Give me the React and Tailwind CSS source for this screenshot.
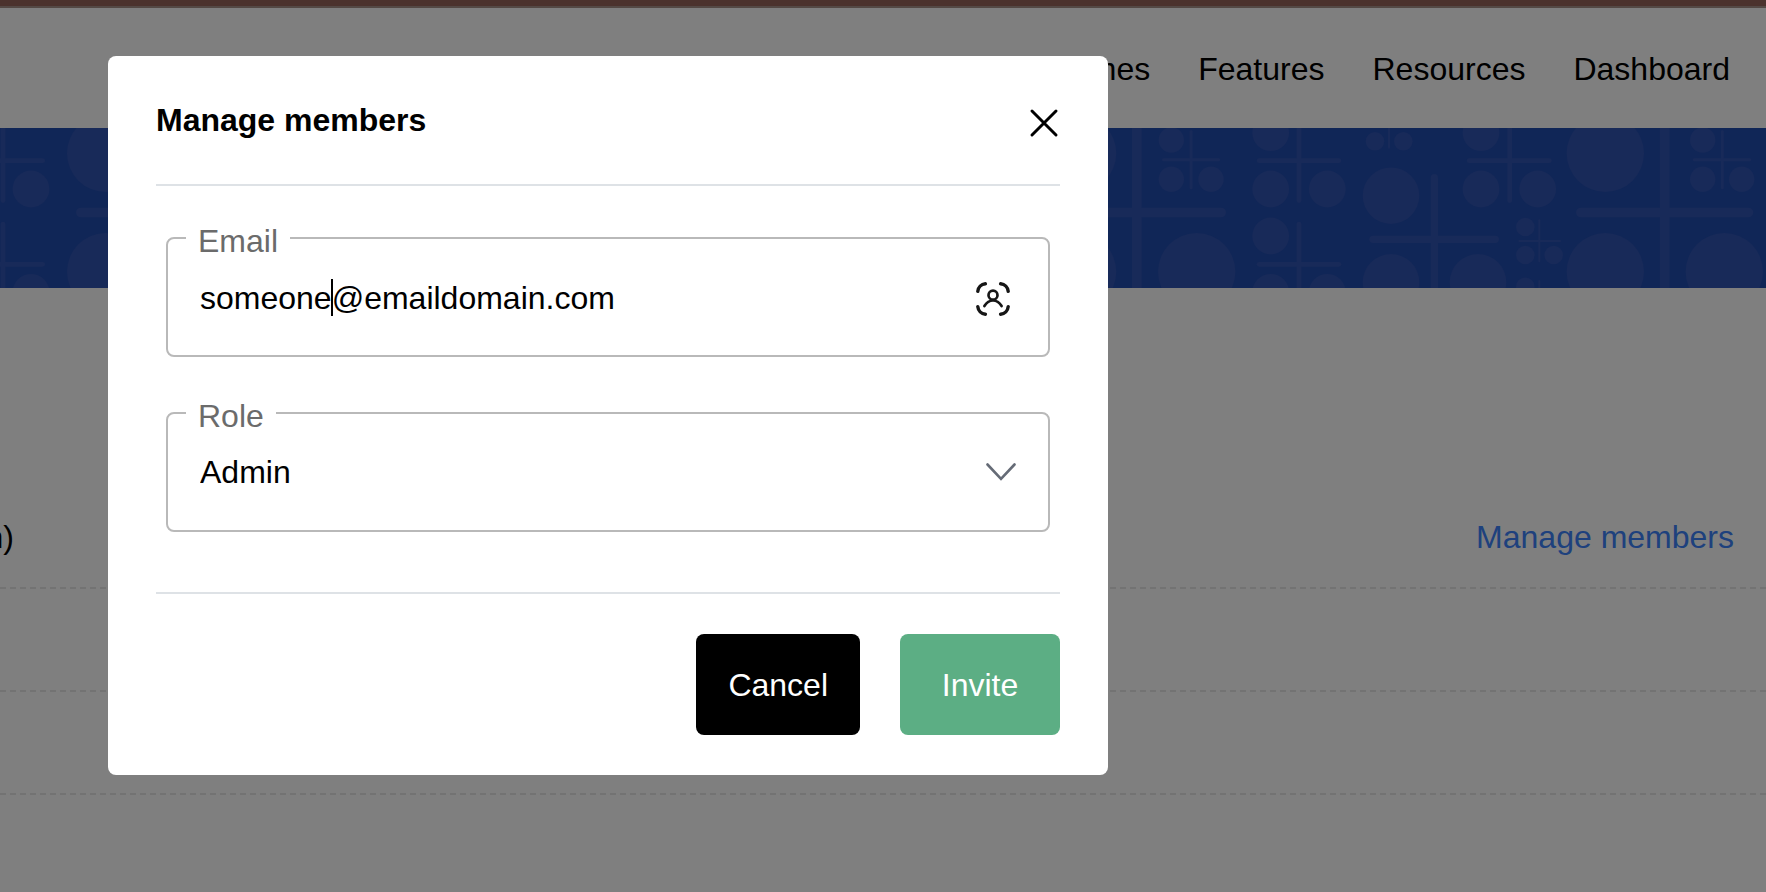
import { useState } from "react";

const navLinks = ["Games", "Features", "Resources", "Dashboard"];

// cx, cy, r
const noughts = [
  [31, 61, 18.4],
  [31, 164.3, 18.4],
  [105.7, 25.3, 38.7],
  [105.7, 143.7, 38.7],
  [1077.6, 25.3, 38.7],
  [1077.6, 143.7, 38.7],
  [1196.7, 143.7, 38.7],
  [1171.3, 12, 12.7],
  [1171.3, 51.3, 12.7],
  [1211, 51.3, 12.7],
  [1270.7, 4.7, 18.4],
  [1270.7, 61, 18.4],
  [1327.3, 61, 18.4],
  [1270.7, 108, 18.4],
  [1270.7, 164.3, 18.4],
  [1327.3, 164.3, 18.4],
  [1375, 13.3, 9.3],
  [1403.3, 13.3, 9.3],
  [1391, 67.7, 28.3],
  [1391, 154.3, 28.3],
  [1478, 154.3, 28.3],
  [1481, 4.7, 18.4],
  [1481, 61, 18.4],
  [1537.7, 61, 18.4],
  [1525.3, 99, 9.3],
  [1525.3, 127, 9.3],
  [1553.7, 127, 9.3],
  [1525.3, 158.7, 9.3],
  [1605.3, 25.3, 38.7],
  [1605.3, 143.7, 38.7],
  [1724.3, 143.7, 38.7],
  [1702.7, 12, 12.7],
  [1702.7, 51.3, 12.7],
  [1741.7, 51.3, 12.7],
];

// x, y, width, height
const bars = [
  [0.6, -10, 4.8, 85],
  [-40, 30.3, 85, 4.8],
  [0.6, 93.7, 4.8, 80],
  [-40, 133.9, 85, 4.8],
  [76, 79.7, 178, 9.6],
  [1132, -10, 9.7, 180],
  [1048, 79.7, 178, 9.6],
  [1189.6, 2, 3, 59.3],
  [1162, 30.2, 58.3, 3],
  [1296.6, -10, 4.8, 85],
  [1256.7, 30.3, 84.6, 4.8],
  [1296.6, 93.7, 4.8, 80],
  [1256.7, 133.9, 84.6, 4.8],
  [1388, -10, 2, 30.7],
  [1430.7, 46, 7.3, 130],
  [1369.3, 107.7, 129.7, 7.3],
  [1507.3, -10, 4.8, 85],
  [1466.7, 30.3, 85, 4.8],
  [1538.3, 91.3, 2, 43],
  [1518.3, 112, 42.7, 2],
  [1538.3, 152, 2, 20],
  [1659.8, -10, 9.7, 180],
  [1576, 79.7, 177.3, 9.6],
  [1720.8, 2, 3, 59.3],
  [1692.7, 30.2, 58.6, 3],
];

const HeroPattern = () => (
  <svg
    className="w-full h-full"
    viewBox="0 0 1766 160"
    preserveAspectRatio="xMidYMid slice"
    fill="#3054b2"
    aria-hidden="true"
  >
    {noughts.map(([cx, cy, r]) => (
      <circle key={`${cx}-${cy}`} cx={cx} cy={cy} r={r} />
    ))}
    {bars.map(([x, y, w, h]) => (
      <rect key={`${x}-${y}`} x={x} y={y} width={w} height={h} rx={Math.min(w, h) / 2} />
    ))}
  </svg>
);

const ContactIcon = () => (
  <svg className="size-[34px]" viewBox="0 0 34 34" fill="none" stroke="#161616" strokeLinecap="round" aria-hidden="true">
    <g strokeWidth="3.4">
      <path d="M1.8 9.4C2.2 5.2 5.2 2.2 9.4 1.8" />
      <path d="M24.6 1.8C28.8 2.2 31.8 5.2 32.2 9.4" />
      <path d="M32.2 24.6C31.8 28.8 28.8 31.8 24.6 32.2" />
      <path d="M9.4 32.2C5.2 31.8 2.2 28.8 1.8 24.6" />
    </g>
    <g strokeWidth="2.7">
      <circle cx="17" cy="13.2" r="4.5" />
      <path d="M8.4 24C10.6 20.4 13.6 18.5 17 18.5S23.4 20.4 25.6 24" />
    </g>
  </svg>
);

const Field = ({ id, label, children }) => (
  <div className="relative flex items-center h-[120px] border-2 border-[#b9b9b9] rounded-lg">
    <label htmlFor={id} className="absolute -top-4 left-[18px] px-3 leading-9 bg-white text-[#6b6b6b]">
      {label}
    </label>
    {children}
  </div>
);

const PageRow = ({ children }) => (
  <div>
    <div className="flex items-center justify-between h-[101px] pr-8">{children}</div>
    <div className="h-0.5 bg-[repeating-linear-gradient(90deg,#e6e6e6_0_6px,transparent_6px_10px)]" />
  </div>
);

const ManageMembersDialog = () => {
  const [email, setEmail] = useState("someone@emaildomain.com");
  const [role, setRole] = useState("Admin");

  return (
    <div
      role="dialog"
      aria-modal="true"
      aria-labelledby="dialog-title"
      className="w-full max-w-[1000px] px-12 bg-white rounded-lg"
    >
      <div className="flex items-center justify-between py-10 border-b-2 border-[#dee2e6]">
        <h2 id="dialog-title" className="leading-12 font-bold">
          Manage members
        </h2>
        <button type="button" aria-label="Close" className="mt-1.5">
          <svg className="size-8" viewBox="0 0 32 32" fill="none" stroke="black" strokeWidth="3" strokeLinecap="round">
            <path d="M4 4L28 28M28 4L4 28" />
          </svg>
        </button>
      </div>

      <div className="flex flex-col gap-[55px] px-2.5 pt-[51px] pb-[60px]">
        <Field id="email" label="Email">
          <input
            id="email"
            type="email"
            value={email}
            onChange={(e) => setEmail(e.target.value)}
            className="flex-1 min-w-0 h-full pt-0.5 pl-8 bg-transparent outline-none"
          />
          {/* Text caret */}
          <span className="absolute left-[163px] top-10 w-0.5 h-[37px] bg-black" />
          <button type="button" aria-label="Fill from contacts" className="mt-1 mr-[38px]">
            <ContactIcon />
          </button>
        </Field>

        <Field id="role" label="Role">
          <select
            id="role"
            value={role}
            onChange={(e) => setRole(e.target.value)}
            className="w-full h-full pl-8 pr-20 appearance-none bg-transparent outline-none rounded-lg"
          >
            <option>Admin</option>
          </select>
          <svg
            className="absolute right-8 w-[30px] h-[18px] pointer-events-none"
            viewBox="0 0 30 18"
            fill="none"
            stroke="#656b76"
            strokeWidth="2.6"
            strokeLinecap="round"
            aria-hidden="true"
          >
            <path d="M1.5 1.5L15 15.8L28.5 1.5" />
          </svg>
        </Field>
      </div>

      <div className="flex justify-end gap-10 py-10 border-t-2 border-[#dee2e6]">
        <button type="button" className="h-[101px] min-w-40 px-8 rounded-lg bg-black text-white">
          Cancel
        </button>
        <button type="button" className="h-[101px] min-w-40 px-8 rounded-lg bg-[#5cae84] text-white">
          Invite
        </button>
      </div>
    </div>
  );
};

const App = () => {
  return (
    <div className="min-h-screen bg-white text-black text-[32px] font-['Liberation_Sans',Arial,sans-serif] overflow-hidden">
      {/* Top strip */}
      <div className="h-2 bg-[#96645a] border-b-2 border-[#a8928a]" />

      <header>
        <nav className="flex items-center justify-end gap-12 h-[120px] pt-0.5 pr-9">
          {navLinks.map((link) => (
            <a key={link} href="#">
              {link}
            </a>
          ))}
        </nav>
      </header>

      <div className="h-40 bg-[#204cae]">
        <HeroPattern />
      </div>

      <main className="pt-[198px]">
        <PageRow>
          <span className="flex justify-end w-3.5 overflow-hidden">(Admin)</span>
          <a href="#" className="text-[#3c82fa]">
            Manage members
          </a>
        </PageRow>
        <PageRow />
        <PageRow />
      </main>

      {/* Backdrop + dialog */}
      <div className="fixed inset-0 flex items-start pt-14 pl-[108px] bg-black/50">
        <ManageMembersDialog />
      </div>
    </div>
  );
};

export default App;
